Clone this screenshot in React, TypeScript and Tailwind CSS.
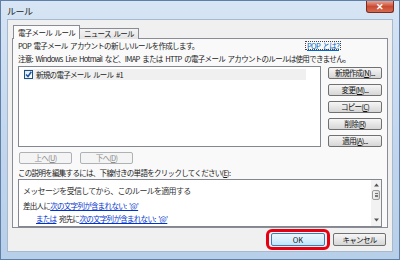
import React from 'react'

const font = { fontFamily: '"Noto Sans CJK JP", "Noto Sans", sans-serif' }

function Btn({ label, className = '', disabled = false }: { label: React.ReactNode; className?: string; disabled?: boolean }) {
  return (
    <div
      className={
        'flex items-center justify-center rounded-[2px] border h-[12px] leading-none whitespace-nowrap ' +
        (disabled
          ? 'border-[#adb2b5] bg-[#f4f4f4] text-[#8d8d8d] '
          : 'border-[#707070] bg-gradient-to-b from-[#f6f6f6] via-[#e6e6e6] to-[#d6d6d6] text-[#111] ') +
        className
      }
    >
      {label}
    </div>
  )
}

function U({ children }: { children: React.ReactNode }) {
  return <span className="underline underline-offset-1">{children}</span>
}

export default function App() {
  return (
    <div
      className="w-[400px] h-[260px] overflow-hidden bg-gradient-to-b from-[#d7e5f4] via-[#c3d7ee] to-[#b8cfe9] border border-[#5f7fa8] text-[7.5px] tracking-[-0.7px] [word-spacing:1.6px] text-[#1a1a1a] flex flex-col"
      style={font}
    >
      {/* title bar */}
      <div className="h-[18px] flex items-start justify-between pl-[6px] pr-[5px] shrink-0">
        <span className="mt-[4px] text-[9px] tracking-[-0.5px] text-[#222]">ルール</span>
        <div className="w-[28px] h-[12px] rounded-b-[3px] border border-t-0 border-[#7b2b22] bg-gradient-to-b from-[#e8a391] via-[#c94a33] to-[#d66a4c] flex items-center justify-center text-white text-[9px] font-bold tracking-normal leading-none">
          ✕
        </div>
      </div>

      {/* client */}
      <div className="mx-[6px] mb-[7px] flex-1 bg-[#f0f0f0] border border-[#a7b9cf] flex flex-col px-[4px] pt-[5px]">
        {/* tabs */}
        <div className="flex items-end h-[14px] ml-[1px] relative z-10">
          <div className="h-[14px] px-[4px] border border-b-0 border-[#898c95] bg-[#fbfbfb] flex items-center">電子メール ルール</div>
          <div className="h-[11px] px-[4px] border border-b-0 border-l-0 border-[#898c95] bg-gradient-to-b from-[#f3f3f3] to-[#e3e3e3] flex items-center">ニュース ルール</div>
        </div>
        <div className="-mt-px h-[190px] border border-[#898c95] bg-[#f9f9f9] flex flex-col px-[5px]">
          <div className="flex justify-between items-center mt-[1px] h-[11px]">
            <span>POP 電子メール アカウントの新しいルールを作成します。</span>
            <span className="text-[#0066cc] underline outline outline-1 outline-dotted outline-[#444] px-[1px] mr-[42px] leading-none">POP とは?</span>
          </div>
          <div className="mt-[3px] h-[10px] flex items-center whitespace-nowrap">
            注意: Windows Live Hotmail など、IMAP または HTTP の電子メール アカウントのルールは使用できません。
          </div>

          <div className="flex mt-[2px] gap-[7px]">
            <div className="w-[303px] h-[81px] bg-white border border-[#828790] pt-[2px] pl-[5px]">
              <div className="flex items-center h-[11px] w-[282px] bg-[#f0f0f0]">
                <div className="w-[9px] h-[9px] border border-[#1c5180] bg-gradient-to-br from-[#dbe6f3] to-white flex items-center justify-center mr-[3px]">
                  <svg width="7" height="7" viewBox="0 0 7 7">
                    <path d="M1 3.5 L3 5.5 L6.3 0.8" fill="none" stroke="#1f56a8" strokeWidth="1.5" />
                  </svg>
                </div>
                <span>新規の電子メール ルール #1</span>
              </div>
            </div>
            <div className="flex flex-col gap-[5px] pt-[1px] w-[54px]">
              <Btn label={<>新規作成(<U>N</U>)...</>} />
              <Btn label={<>変更(<U>M</U>)...</>} />
              <Btn label={<>コピー(<U>C</U>)</>} />
              <Btn label={<>削除(<U>R</U>)</>} />
              <Btn label={<>適用(<U>A</U>)...</>} />
            </div>
          </div>

          <div className="flex gap-[8px] mt-[5px] ml-[1px]">
            <Btn disabled className="w-[53px]" label={<>上へ(<U>U</U>)</>} />
            <Btn disabled className="w-[53px]" label={<>下へ(<U>D</U>)</>} />
          </div>

          <div className="mt-[4px] h-[10px] flex items-center">
            この説明を編集するには、下線付きの単語をクリックしてください(<U>E</U>):
          </div>

          <div className="mt-[1px] h-[50px] w-[364px] bg-white border border-[#828790] flex text-[8px]">
            <div className="flex-1 pl-[4px] pt-[4px] flex flex-col">
              <div className="h-[13px] flex items-center text-[#333]">メッセージを受信してから、このルールを適用する</div>
              <div className="h-[14px] mt-[2px] flex items-center text-[7.5px]">
                差出人に<span className="text-[#0033cc] underline">次の文字列が含まれない: '@'</span>
              </div>
              <div className="h-[12px] flex items-center text-[7.5px] pl-[13px]">
                <span className="text-[#0033cc] underline">または</span>&nbsp;宛先に<span className="text-[#0033cc] underline">次の文字列が含まれない: '@'</span>
              </div>
            </div>
            <div className="w-[10px] bg-[#f2f2f2] flex flex-col items-center pt-[3px] tracking-normal">
              <svg width="5" height="4" viewBox="0 0 5 4"><path d="M0 3.5 L2.5 0.5 L5 3.5Z" fill="#555" /></svg>
              <div className="mt-[3px] w-[8px] h-[10px] rounded-[2px] border border-[#9a9a9a] bg-gradient-to-r from-[#f3f3f3] to-[#dadada] flex items-center justify-center">
                <div className="w-[3px] h-[4px] border-y border-[#777] flex items-center"><div className="w-full h-px bg-[#777]" /></div>
              </div>
              <div className="flex-1" />
              <svg className="mb-[4px]" width="5" height="4" viewBox="0 0 5 4"><path d="M0 0.5 L2.5 3.5 L5 0.5Z" fill="#555" /></svg>
            </div>
          </div>
        </div>

        {/* bottom buttons */}
        <div className="flex justify-end gap-[8px] mt-[5px] pr-[2px]">
          <div className="relative">
            <div className="absolute -inset-x-[5px] -inset-y-[4px] rounded-[6px] border-[3px] border-[#e60012]" />
            <div className="w-[54px] h-[13px] rounded-[2px] border border-[#3c7fb1] bg-gradient-to-b from-[#eaf6fd] via-[#d9f0fc] to-[#bee6fd] flex items-center justify-center tracking-normal">
              OK
            </div>
          </div>
          <Btn className="w-[53px] h-[13px]" label="キャンセル" />
        </div>
      </div>
    </div>
  )
}
